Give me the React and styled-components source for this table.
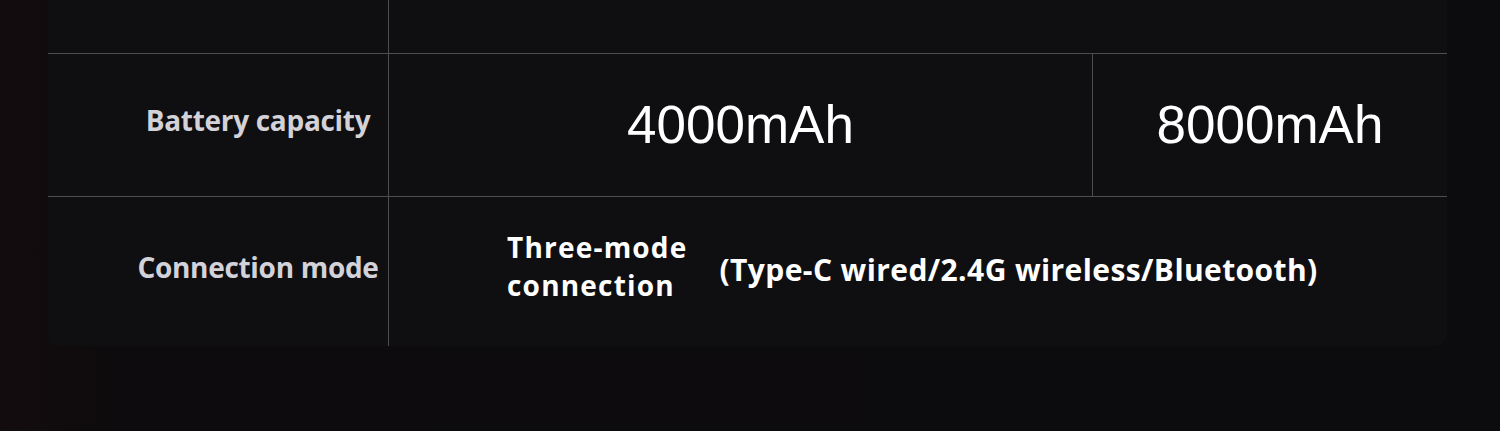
import styled, { createGlobalStyle } from "styled-components";

const GlobalStyle = createGlobalStyle`
    html, body {
        margin: 0;
        padding: 0;
        background: #0c0b0d;
    }
`

const Page = styled.div`
    width: 1500px;
    height: 431px;
    overflow: hidden;
    background: linear-gradient(90deg, #130c0e 0px, #0d0b0d 120px, #0c0b0d 100%);
`

const Card = styled.div`
    margin-left: 48px;
    width: 1399px;
    background: #0f0f12;
    border-radius: 0 0 12px 12px;
    display: flex;
    flex-direction: column;
`

const Row = styled.div`
    display: grid;
    grid-template-columns: 340px 704px 1fr;
    height: ${props => props.$h}px;
    border-bottom: ${props => props.$last ? "none" : "1px solid #4c4c51"};
`

const Cell = styled.div`
    grid-column: span ${props => props.$span || 1};
    display: flex;
    align-items: center;
    justify-content: center;
    border-left: ${props => props.$line ? "1px solid #4c4c51" : "none"};
`

const Label = styled(Cell)`
    padding: 0 0 10px 80px;
    font-family: "Open Sans", "DejaVu Sans", sans-serif;
    font-weight: 700;
    font-size: 28px;
    letter-spacing: -0.3px;
    color: #d3d2d9;
    white-space: nowrap;
`

const Value = styled(Cell)`
    padding-bottom: 2px;
    font-family: "Liberation Sans", Arial, sans-serif;
    font-size: 53px;
    color: #ffffff;
`

const ModeCell = styled(Cell)`
    justify-content: flex-start;
    padding: 0 0 4px 118px;
    gap: 32px;
    font-family: "Open Sans", "DejaVu Sans", sans-serif;
    font-weight: 700;
    color: #ffffff;
`

const ModeTitle = styled.div`
    font-size: 28px;
    line-height: 38px;
    letter-spacing: 1.2px;
    padding-bottom: 8px;
`

const ModeDetail = styled.div`
    font-size: 30px;
    letter-spacing: 0.4px;
    white-space: nowrap;
`

export default function App() {
    return (
        <Page>
            <GlobalStyle />
            <Card>
                <Row $h={53}>
                    <Cell />
                    <Cell $line $span={2} />
                </Row>
                <Row $h={142}>
                    <Label>Battery capacity</Label>
                    <Value $line>4000mAh</Value>
                    <Value $line>8000mAh</Value>
                </Row>
                <Row $h={149} $last>
                    <Label>Connection mode</Label>
                    <ModeCell $line $span={2}>
                        <ModeTitle>
                            Three-mode<br />connection
                        </ModeTitle>
                        <ModeDetail>(Type-C wired/2.4G wireless/Bluetooth)</ModeDetail>
                    </ModeCell>
                </Row>
            </Card>
        </Page>
    );
}
